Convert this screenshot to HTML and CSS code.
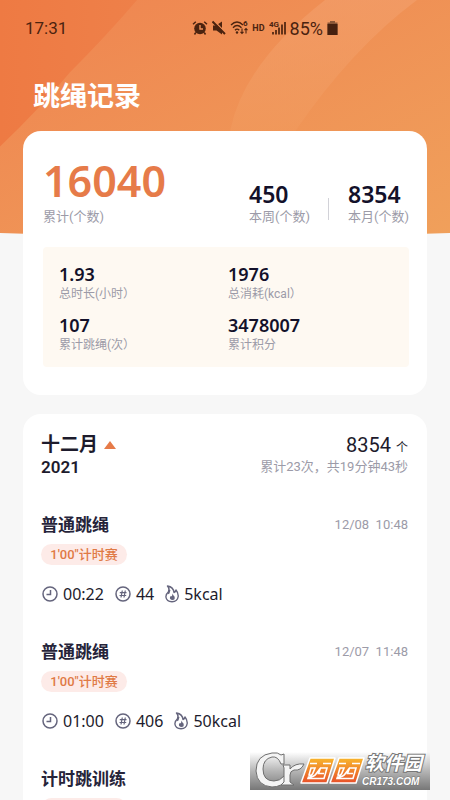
FILE: index.html
```html
<!DOCTYPE html>
<html lang="zh-CN">
<head>
<meta charset="utf-8">
<meta name="viewport" content="width=device-width, initial-scale=1">
<title>跳绳记录</title>
<link rel="stylesheet" href="styles.css">
</head>
<body>
<div class="screen">
  <svg class="backdrop" viewBox="0 0 450 235" preserveAspectRatio="none" aria-hidden="true">
    <defs>
      <linearGradient id="base" x1="0" y1="0" x2="1" y2="1"><stop offset="0" stop-color="#ef8450"/><stop offset="1" stop-color="#f0a05b"/></linearGradient>
      <linearGradient id="deep" x1="0" y1="0" x2="1" y2="0"><stop offset="0" stop-color="#ee7a43"/><stop offset="1" stop-color="#ee8049"/></linearGradient>
      <linearGradient id="band" x1="0" y1="0" x2="0" y2="1"><stop offset="0" stop-color="#f3a06d" stop-opacity=".6"/><stop offset="1" stop-color="#f19a5d" stop-opacity=".6"/></linearGradient>
    </defs>
    <path fill="url(#base)" d="M0 0H450V232Q225 240 0 232Z"/>
    <path fill="url(#deep)" d="M0 0H137Q108 34 70 72Q38 110 0 146Z"/>
    <path fill="url(#band)" d="M325 0H417Q352 48 295 131H230Q243 64 325 0Z"/>
  </svg>

  <header class="status">
    <span class="clock">17:31</span>
    <div class="indicators">
      <svg width="16" height="16" viewBox="0 0 16 16" aria-hidden="true"><circle cx="8" cy="8.5" r="5.8" fill="#4b230f"/><path d="M1 4.2 3.8 1.8M15 4.2 12.2 1.8M3.8 12.5 2.5 14.5M12.2 12.5 13.5 14.5" stroke="#4b230f" stroke-width="1.5" fill="none"/><path d="M8 5v4h3" stroke="#f09159" stroke-width="1.4" fill="none"/></svg>
      <svg width="14" height="16" viewBox="0 0 14 16" aria-hidden="true"><path d="M1 5.5h3L10 1.5v13L4.500 10.500H1z" fill="#4b230f"/><path d="M1.500 .5 14 13" stroke="#f09159" stroke-width="1.500"/><path d="M.5 1.500 13 14" stroke="#4b230f" stroke-width="2"/></svg>
      <svg width="18" height="16" viewBox="0 0 18 16" aria-hidden="true"><g fill="none" stroke="#4b230f" stroke-width="1.400"><path d="M1 5Q7-1 13 5M3 7.700Q7 3.500 11.500 7.700M5 10.200Q7 8 9.300 10.200"/><path d="M12 8.500v5M10.500 11.800l1.500 1.700 1.500-1.700M16 13.500v-5M14.500 10.200l1.500-1.700 1.500 1.700" stroke-width="1.100"/></g><circle cx="7" cy="12.500" r="1.200" fill="#4b230f"/><text x="13" y="6" class="micro">6</text></svg>
      <span class="hd">HD</span>
      <svg width="17" height="16" viewBox="0 0 17 16" aria-hidden="true"><text x="0" y="7" class="micro">4G</text><path d="M4 12v2.500M7 10v4.500M10 7.500v7M13 4.500v10M16 2v12.500" stroke="#4b230f" stroke-width="1.700"/></svg>
      <span class="charge">85%</span>
      <svg width="11" height="16" viewBox="0 0 11 16" aria-hidden="true"><path d="M3 1h5v1.500h2.500V15H.5V2.500H3z" fill="#8a5637"/><path d="M.5 4h10v11H.5z" fill="#46200f"/></svg>
    </div>
  </header>

  <h1 class="title">跳绳记录</h1>

  <main>
    <section class="card summary">
      <div class="totals">
        <div class="total"><strong>16040</strong><span>累计(个数)</span></div>
        <div class="recent">
          <div class="period"><strong>450</strong><span>本周(个数)</span></div>
          <div class="period"><strong>8354</strong><span>本月(个数)</span></div>
        </div>
      </div>
      <div class="details">
        <div class="detail"><strong>1.93</strong><span>总时长(小时）</span></div>
        <div class="detail"><strong>1976</strong><span>总消耗(kcal）</span></div>
        <div class="detail"><strong>107</strong><span>累计跳绳(次）</span></div>
        <div class="detail"><strong>3478007</strong><span>累计积分</span></div>
      </div>
    </section>

    <section class="card history">
      <div class="month">
        <button class="picker" type="button"><span class="name">十二月 <i class="caret"></i></span><span class="year">2021</span></button>
        <div class="sum"><span class="count">8354 <small>个</small></span><span class="note">累计23次，共19分钟43秒</span></div>
      </div>

      <article class="record">
        <div class="head"><h2>普通跳绳</h2><time>12/08  10:48</time></div>
        <span class="tag">1'00"计时赛</span>
        <div class="stats">
          <span class="stat"><svg width="16" height="16" viewBox="0 0 16 16" aria-hidden="true"><use href="#clock"/></svg>00:22</span>
          <span class="stat"><svg width="16" height="16" viewBox="0 0 16 16" aria-hidden="true"><use href="#hash"/></svg>44</span>
          <span class="stat"><svg width="14" height="18" viewBox="0 0 14 18" aria-hidden="true"><use href="#flame"/></svg>5kcal</span>
        </div>
      </article>
      <article class="record">
        <div class="head"><h2>普通跳绳</h2><time>12/07  11:48</time></div>
        <span class="tag">1'00"计时赛</span>
        <div class="stats">
          <span class="stat"><svg width="16" height="16" viewBox="0 0 16 16" aria-hidden="true"><use href="#clock"/></svg>01:00</span>
          <span class="stat"><svg width="16" height="16" viewBox="0 0 16 16" aria-hidden="true"><use href="#hash"/></svg>406</span>
          <span class="stat"><svg width="14" height="18" viewBox="0 0 14 18" aria-hidden="true"><use href="#flame"/></svg>50kcal</span>
        </div>
      </article>
      <article class="record">
        <div class="head"><h2>计时跳训练</h2></div>
        <span class="tag"></span>
      </article>
    </section>
  </main>

  <div class="stamp">
    <svg width="180" height="38" viewBox="0 0 180 38" role="img" aria-label="西西软件园 CR173.COM">
      <defs>
        <linearGradient id="fire" x1="0" y1="0" x2="0" y2="1"><stop offset="0" stop-color="#f8b62c"/><stop offset="1" stop-color="#e8502a"/></linearGradient>
      </defs>
      <g stroke="#6f6f6f" stroke-width="1" fill="#f4f4f4">
        <path d="M34 2V12H31Q28 4 22 5Q13 7 13 17Q13 29 24 29Q30 29 34 24L37 27Q32 35 22 35Q7 34 6 19Q6 3 22 1Q28 0 31 3Z"/>
        <path d="M33 13H40V17Q45 11 54 12Q51 19 44 18Q40 19 40 23V30L44 33H31L34 30V16Z"/>
      </g>
      <g fill="url(#fire)" stroke="#fff" stroke-width="1.500" stroke-linejoin="round">
        <path d="M60 6H85L77 31H51Z"/>
        <path d="M89 6H114L106 31H80Z"/>
      </g>
      <g fill="none" stroke="#fff" stroke-width="1.600">
        <path d="M60 11.500H67M73 11.500H81M61 16H65L62.500 22Q61 24 59 23ZM70.500 16H77L74 26.500H58L58.500 25Q64 25 66 22ZM70.500 16 68.500 21.500H74"/>
        <path d="M89 11.500H96M102 11.500H110M90 16H94L91.500 22Q90 24 88 23ZM99.500 16H106L103 26.500H87L87.500 25Q93 25 95 22ZM99.500 16 97.500 21.500H103"/>
      </g>
      <text x="115" y="18" class="brand">软件园</text>
      <text x="112" y="33" class="site">CR173.COM</text>
    </svg>
  </div>
</div>

<svg class="symbols" aria-hidden="true">
  <symbol id="clock" viewBox="0 0 16 16"><circle cx="8" cy="8" r="7" fill="none" stroke="#65657d" stroke-width="1.500"/><path d="M8.500 4v4.500H4.500" fill="none" stroke="#65657d" stroke-width="1.500"/></symbol>
  <symbol id="hash" viewBox="0 0 16 16"><circle cx="8" cy="8" r="7" fill="none" stroke="#65657d" stroke-width="1.500"/><path d="M7.300 4.500 6 11.500M10.300 4.500 9 11.500M4.800 6.700H11.500M4.500 9.500H11.200" fill="none" stroke="#65657d" stroke-width="1.200"/></symbol>
  <symbol id="flame" viewBox="0 0 14 18"><path d="M2.500 1Q8.500 2 9 7.500Q10.500 7 11 5Q13.500 8 13.200 11.500Q12.500 16.500 7 16.800Q1.500 16.500 .9 12Q.8 9 3.300 7Q5 4 2.500 1Z" fill="none" stroke="#65657d" stroke-width="1.400" stroke-linejoin="round"/><path d="M3.500 4.500 5.500 5 4.500 8.500 2.500 9.500Z" fill="#65657d"/><path d="M7.700 8.500Q8 10.500 9.500 11.500Q10.500 15 7.500 15Q4.300 14.500 5 12L6 10.800 6.800 11.500Z" fill="#65657d"/></symbol>
</svg>
</body>
</html>
```
FILE: styles.css
```css
* { box-sizing: border-box; }

body {
  margin: 0;
  background: #f7f7f7;
  color: #1d1b2c;
  font-family: Roboto, "Noto Sans CJK SC", sans-serif;
}

.screen {
  position: relative;
  height: 100vh;
  overflow: hidden;
}

.backdrop {
  position: absolute;
  inset: 0 0 auto;
  z-index: -1;
  width: 100%;
  height: 236px;
}

.symbols { position: absolute; width: 0; height: 0; }

.status {
  display: flex;
  justify-content: space-between;
  align-items: center;
  height: 56px;
  padding: 0 112px 0 25px;
  color: #4b230f;
}

.clock { font-size: 17px; }
.indicators { display: flex; align-items: center; gap: 4px; }
.indicators svg { flex: none; }
.hd { font-size: 9px; font-weight: 700; }
.charge { font-size: 18px; }
.micro { font: 700 8px Roboto, sans-serif; fill: #4b230f; }

.title {
  margin: 21px 33px 14px;
  color: #fff;
  font-size: 27px;
  line-height: 40px;
  font-weight: 700;
}

main {
  display: grid;
  gap: 19px;
  margin: 0 23px;
}

.card {
  padding: 20px;
  border-radius: 18px;
  background: #fff;
}

.summary { padding: 23px 18px 28px 20px; }
.summary strong { display: block; font-family: "Noto Sans", sans-serif; font-weight: 600; color: #13112a; }
.summary span { display: block; color: #9c9ba8; line-height: 18px; }

.totals { display: flex; justify-content: space-between; align-items: flex-end; font-size: 13px; }
.total strong { color: #e67b49; font-size: 43px; line-height: 54px; }
.recent { display: flex; gap: 38px; }
.period { position: relative; }
.period strong { font-size: 23px; line-height: 28px; }
.period + .period::before {
  content: "";
  position: absolute;
  left: -20px;
  bottom: 6px;
  width: 1px;
  height: 22px;
  background: #d2d2d8;
}

.details {
  display: grid;
  grid-template-columns: 1fr 1fr;
  row-gap: 11px;
  margin-top: 21px;
  padding: 16px 12px 13px 16px;
  border-radius: 4px;
  background: #fef9f2;
  font-size: 12px;
}
.detail strong { font-size: 18px; line-height: 22px; }

.history { padding: 20px 19px 34px 18px; }

.month { display: flex; justify-content: space-between; line-height: 22px; margin-bottom: 35px; }
.picker,
.sum {
  display: grid;
  grid-template-rows: 22px 22px;
}
.picker {
  padding: 0;
  border: 0;
  background: none;
  color: inherit;
  font: inherit;
  text-align: left;
}
.name { display: flex; align-items: center; gap: 6px; font-size: 19px; font-weight: 700; }
.year { font-size: 17px; font-weight: 600; }
.caret {
  border: 6px solid transparent;
  border-top: 0;
  border-bottom: 8px solid #e67b49;
}
.sum { text-align: right; }
.count { font-size: 20px; }
.count small { font-size: 12px; }
.note, time { color: #9c9ba8; font-size: 13px; }

.record + .record { margin-top: 34px; }
.head { display: flex; justify-content: space-between; height: 24px; line-height: 24px; }
.head h2 { margin: 0; font-size: 17px; font-weight: 700; color: #26243a; }
time { white-space: pre; }
.tag {
  display: block;
  width: 86px;
  height: 21px;
  margin-top: 7px;
  border-radius: 11px;
  background: #fdebe8;
  color: #e07a45;
  font-size: 13px;
  line-height: 21px;
  font-weight: 500;
  text-align: center;
}
.stats { display: flex; gap: 11px; margin-top: 17px; padding-left: 1px; }
.stat {
  display: flex;
  align-items: center;
  gap: 5px;
  font-family: "Noto Sans", sans-serif;
  font-size: 16px;
  line-height: 24px;
}

.stamp {
  position: absolute;
  right: 20px;
  bottom: 10px;
  height: 38px;
  background: linear-gradient(rgba(255, 255, 255, 0), #b5b5b5 50%, #777);
}
.stamp svg { display: block; overflow: visible; }
.brand { font: italic 700 19px "Noto Sans CJK SC", sans-serif; fill: #fff; stroke: #777; stroke-width: 2px; paint-order: stroke; }
.site { font: italic 700 10px "Liberation Sans", sans-serif; fill: #fff; stroke: #777; stroke-width: 1px; paint-order: stroke; }
```
